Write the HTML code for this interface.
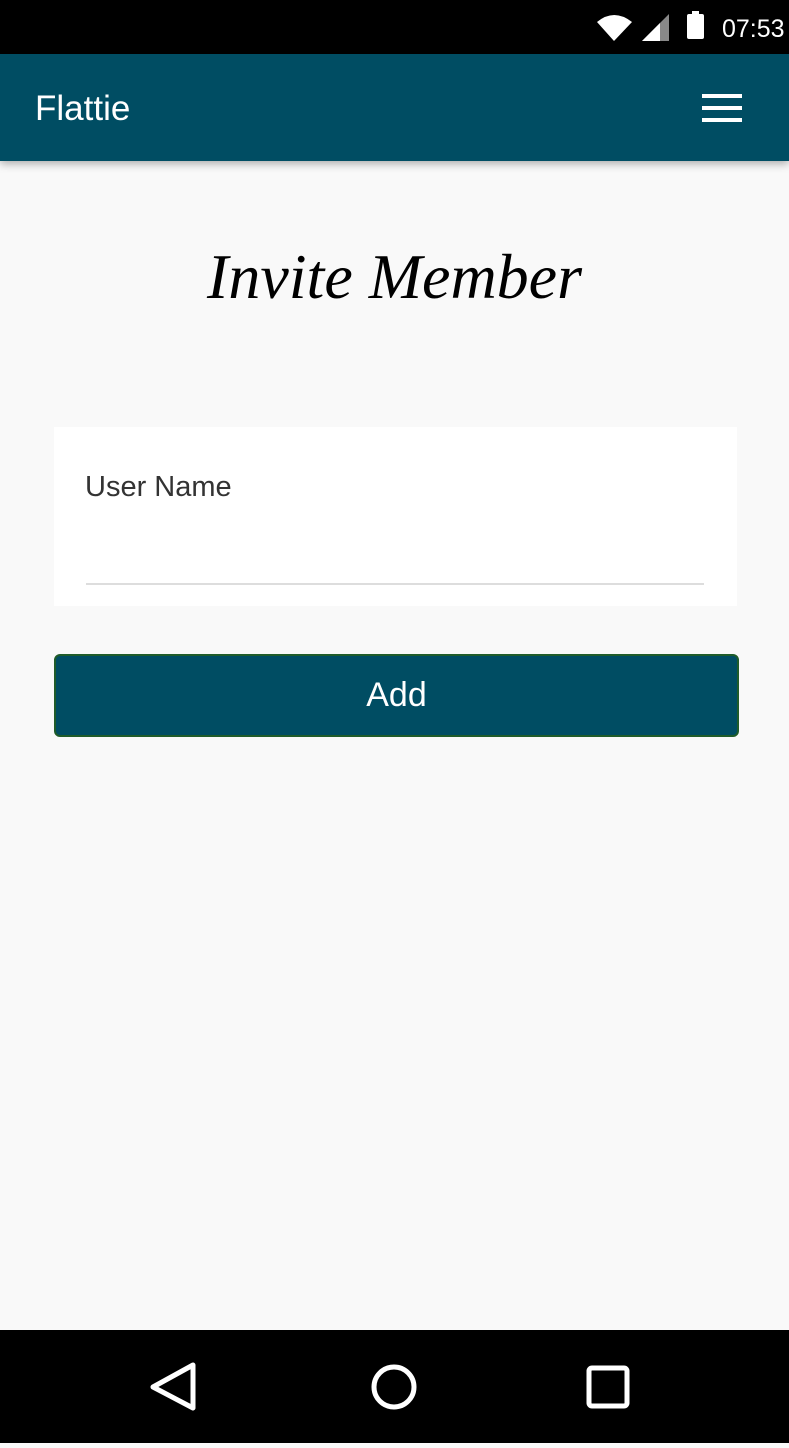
<!DOCTYPE html>
<html><head><style>
*{margin:0;padding:0;box-sizing:border-box}
body{width:789px;height:1443px;background:#f9f9f9;font-family:"Liberation Sans",sans-serif;position:relative;overflow:hidden}
.status{position:absolute;top:0;left:0;width:789px;height:54px;background:#000}
.bar{position:absolute;top:54px;left:0;width:789px;height:107px;background:#004d63;box-shadow:0 3px 8px rgba(0,0,0,.3)}
.bar .t{position:absolute;left:35px;top:35px;color:#fff;font-size:35px}
.ham{position:absolute;left:702px;width:40px;height:4px;background:#fff}
h1{position:absolute;top:240px;left:0;width:789px;text-align:center;font-family:"Liberation Serif",serif;font-style:italic;font-weight:normal;font-size:64px;color:#000}
.card{position:absolute;left:54px;top:427px;width:683px;height:179px;background:#fff}
.card .l{position:absolute;left:31px;top:44px;font-size:29px;color:#333}
.card .u{position:absolute;left:32px;top:156px;width:618px;height:2px;background:#ddd}
.btn{position:absolute;left:54px;top:654px;width:685px;height:83px;background:#004d63;border:2px solid #1f5c2a;border-radius:6px;color:#fff;font-size:34px;text-align:center;line-height:79px}
.nav{position:absolute;top:1330px;left:0;width:789px;height:113px;background:#000}
</style></head><body>
<div class="status">
<svg width="789" height="54" style="position:absolute;left:0;top:0">
<path d="M597 22 Q614 8 632 22 L614 41 Z" fill="#fff"/>
<path d="M642 41 L669 14 L669 41 Z" fill="#888"/><path d="M642 41 L660 23 L660 41 Z" fill="#fff"/>
<rect x="687" y="14" width="17" height="25" rx="2" fill="#fff"/><rect x="692" y="11" width="7" height="4" fill="#fff"/>
<text x="722" y="37" fill="#fff" font-family="Liberation Sans" font-size="25">07:53</text>
</svg></div>
<div class="bar"><div class="t">Flattie</div>
<div class="ham" style="top:40px"></div><div class="ham" style="top:52px"></div><div class="ham" style="top:64px"></div></div>
<h1>Invite Member</h1>
<div class="card"><div class="l">User Name</div><div class="u"></div></div>
<div class="btn">Add</div>
<div class="nav"><svg width="789" height="113">
<path d="M193 35 L153 57 L193 78 Z" fill="none" stroke="#fff" stroke-width="5" stroke-linejoin="round"/>
<circle cx="394" cy="57" r="20" fill="none" stroke="#fff" stroke-width="5"/>
<rect x="589" y="38" width="38" height="38" rx="3" fill="none" stroke="#fff" stroke-width="5"/>
</svg></div>
</body></html>
